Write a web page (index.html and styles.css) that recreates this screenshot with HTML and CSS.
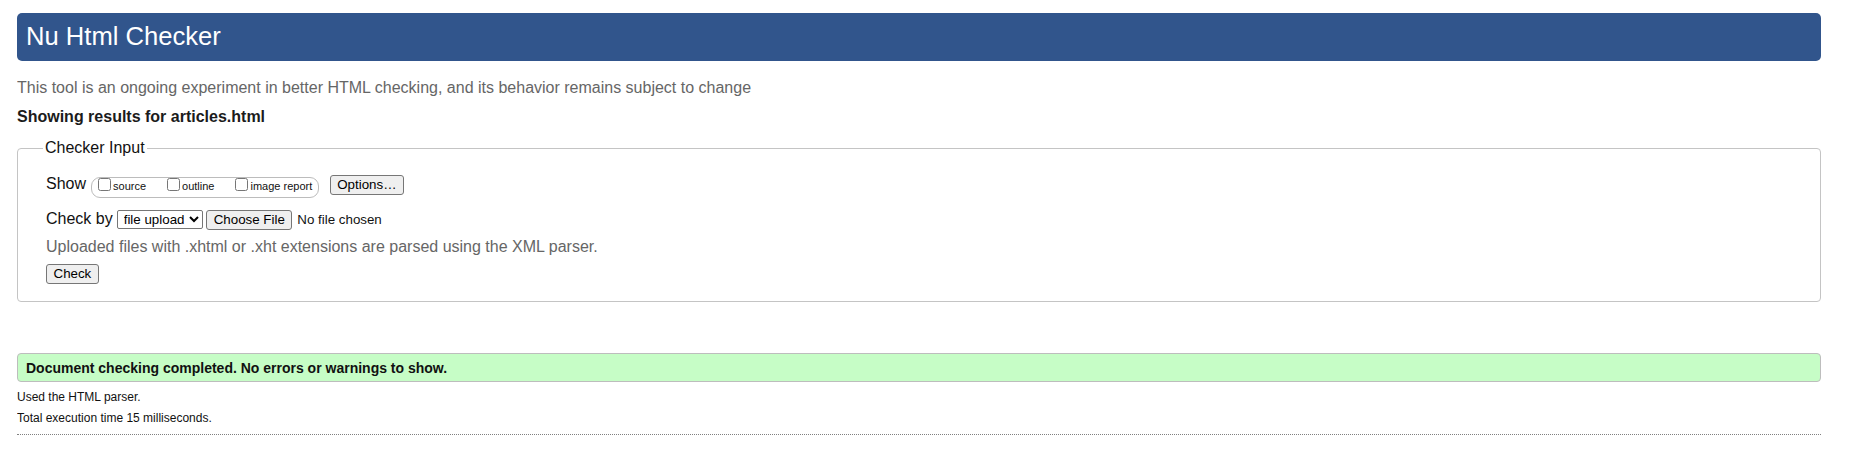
FILE: index.html
```html
<!DOCTYPE html>
<html lang="en">
<head>
<meta charset="utf-8">
<title>Nu Html Checker</title>
<link rel="stylesheet" href="styles.css">
</head>
<body>
<h1 class="title">Nu Html Checker</h1>
<p class="intro">This tool is an ongoing experiment in better HTML checking, and its behavior remains subject to change</p>
<p class="results-for">Showing results for articles.html</p>
<form class="checker">
  <fieldset class="input-set">
    <legend class="legend">Checker Input</legend>
    <div class="row row-show">
      <span class="row-label">Show</span>
      <span class="opts">
        <label class="opt"><input type="checkbox" class="cb"><span class="opt-text">source</span></label>
        <label class="opt"><input type="checkbox" class="cb"><span class="opt-text">outline</span></label>
        <label class="opt"><input type="checkbox" class="cb"><span class="opt-text">image report</span></label>
      </span>
      <button type="button" class="btn btn-options">Options…</button>
    </div>
    <div class="row row-by">
      <span class="row-label">Check by</span>
      <select class="sel"><option>file upload</option></select>
      <button type="button" class="btn btn-file">Choose File</button>
      <span class="file-none">No file chosen</span>
    </div>
    <p class="note">Uploaded files with .xhtml or .xht extensions are parsed using the XML parser.</p>
    <div class="row row-check">
      <button type="button" class="btn">Check</button>
    </div>
  </fieldset>
</form>
<p class="success">Document checking completed. No errors or warnings to show.</p>
<p class="small first">Used the HTML parser.</p>
<p class="small">Total execution time 15 milliseconds.</p>
<hr class="rule">
</body>
</html>
```

FILE: styles.css
```css
html, body {
  background: #fff;
}
body {
  margin: 13px 39px 0 17px;
  font-family: "Liberation Sans", Arial, sans-serif;
  font-size: 16px;
  color: #111;
}
.title {
  margin: 0;
  height: 48px;
  box-sizing: border-box;
  padding: 9px 9px 0;
  background: #31558c;
  color: #fff;
  font-size: 25.6px;
  line-height: 29px;
  font-weight: normal;
  border-radius: 5px;
}
.intro {
  margin: 18px 0 0;
  line-height: 18px;
  color: #666;
}
.results-for {
  margin: 11px 0 0;
  line-height: 18px;
  font-weight: bold;
  color: #1b1b1b;
}
.checker {
  margin: 0;
}
.input-set {
  margin: 13px 0 0;
  border: 1px solid #c4c4c4;
  border-radius: 4px;
  padding: 18px 0 17px 28px;
  min-inline-size: 0;
}
.legend {
  padding: 0 2px;
  margin-left: -3px;
  font-size: 16px;
  line-height: 18px;
  color: #111;
}
.row {
  display: flex;
  align-items: flex-start;
}
.row-label {
  line-height: 18px;
  color: #111;
}
.opts {
  display: inline-flex;
  align-items: flex-start;
  margin: 2px 0 0 5px;
  height: 21px;
  box-sizing: border-box;
  border: 1px solid #bcbcbc;
  border-radius: 9px;
  padding: 0 6px;
}
.opt {
  display: flex;
  align-items: flex-start;
  margin-right: 21px;
}
.opt:last-child {
  margin-right: 0;
}
.cb {
  margin: 0 2px 0 0;
  width: 13px;
  height: 13px;
}
.opt-text {
  font-size: 11px;
  line-height: 13px;
  margin-top: 1.5px;
}
.btn {
  font-family: "Liberation Sans", Arial, sans-serif;
  font-size: 13.33px;
  line-height: 16px;
  height: 20px;
  box-sizing: border-box;
  padding: 1px 6.5px;
  margin: 0;
  border: 1px solid #767676;
  border-radius: 3px;
  background: #efefef;
  color: #000;
}
.btn-options {
  margin-left: 10.5px;
}
.row-by {
  margin-top: 11.5px;
}
.sel {
  margin-left: 4px;
  width: 86px;
  height: 19px;
  box-sizing: border-box;
  font-family: "Liberation Sans", Arial, sans-serif;
  font-size: 13.33px;
  border: 1px solid #767676;
  border-radius: 2px;
  background: #fff;
  color: #000;
  padding: 0 0 0 2px;
}
.btn-file {
  margin-left: 3.5px;
}
.file-none {
  margin: 2px 0 0 5px;
  font-size: 13.33px;
  line-height: 16px;
  color: #111;
}
.note {
  margin: 8.3px 0 0;
  line-height: 18px;
  color: #666;
}
.row-check {
  margin-top: 8.2px;
}
.success {
  margin: 51px 0 0;
  border: 1px solid #bdbdbd;
  border-radius: 4px;
  background: #c6fdc6;
  padding: 6px 8px 4px;
  font-size: 14px;
  line-height: 17px;
  font-weight: bold;
  color: #111;
}
.small {
  margin: 7px 0 0;
  font-size: 12px;
  line-height: 14px;
  color: #111;
}
.small.first {
  margin-top: 8px;
}
.rule {
  margin: 9px 0 0;
  height: 0;
  border: 0;
  border-top: 1px dotted #808080;
}
```
